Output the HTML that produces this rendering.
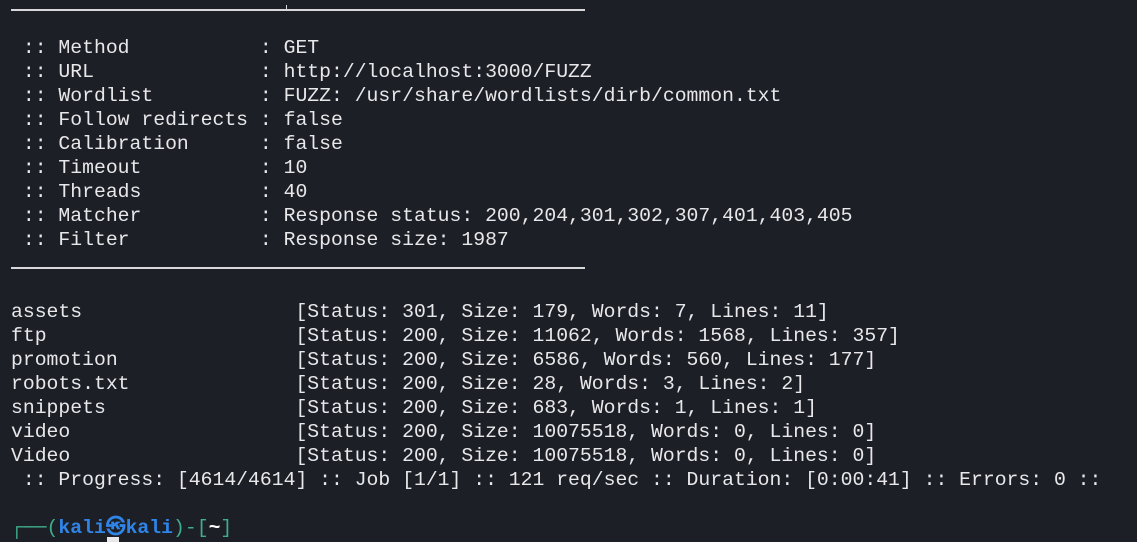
<!DOCTYPE html>
<html><head><meta charset="utf-8"><style>
html,body{margin:0;padding:0;background:#1d1f27;width:1137px;height:542px;overflow:hidden;position:relative}
pre{position:absolute;left:11px;top:36px;margin:0;font-family:"Liberation Mono","DejaVu Sans Mono",monospace;font-size:19.75px;line-height:24px;color:#e8e8ea}
.sep{position:absolute;left:11px;width:574px;height:2px;background:#d8d8da}
.g{color:#3fae8c}.b{color:#2f84e8;font-weight:bold}.w{font-weight:bold;color:#fff}
.cur{position:absolute;left:107px;top:537px;width:12px;height:5px;background:#e8e8ea}
</style></head><body>
<div class="sep" style="top:9px"></div>
<div style="position:absolute;left:286px;top:5px;width:1px;height:6px;background:#d8d8da"></div>
<div class="sep" style="top:267px"></div>
<pre> :: Method           : GET
 :: URL              : http://localhost:3000/FUZZ
 :: Wordlist         : FUZZ: /usr/share/wordlists/dirb/common.txt
 :: Follow redirects : false
 :: Calibration      : false
 :: Timeout          : 10
 :: Threads          : 40
 :: Matcher          : Response status: 200,204,301,302,307,401,403,405
 :: Filter           : Response size: 1987


assets                  [Status: 301, Size: 179, Words: 7, Lines: 11]
ftp                     [Status: 200, Size: 11062, Words: 1568, Lines: 357]
promotion               [Status: 200, Size: 6586, Words: 560, Lines: 177]
robots.txt              [Status: 200, Size: 28, Words: 3, Lines: 2]
snippets                [Status: 200, Size: 683, Words: 1, Lines: 1]
video                   [Status: 200, Size: 10075518, Words: 0, Lines: 0]
Video                   [Status: 200, Size: 10075518, Words: 0, Lines: 0]
 :: Progress: [4614/4614] :: Job [1/1] :: 121 req/sec :: Duration: [0:00:41] :: Errors: 0 ::

<span class="g">┌──(</span><span class="b">kali㉿kali</span><span class="g">)-[</span><span class="w">~</span><span class="g">]</span></pre>
<div class="cur"></div>
</body></html>
